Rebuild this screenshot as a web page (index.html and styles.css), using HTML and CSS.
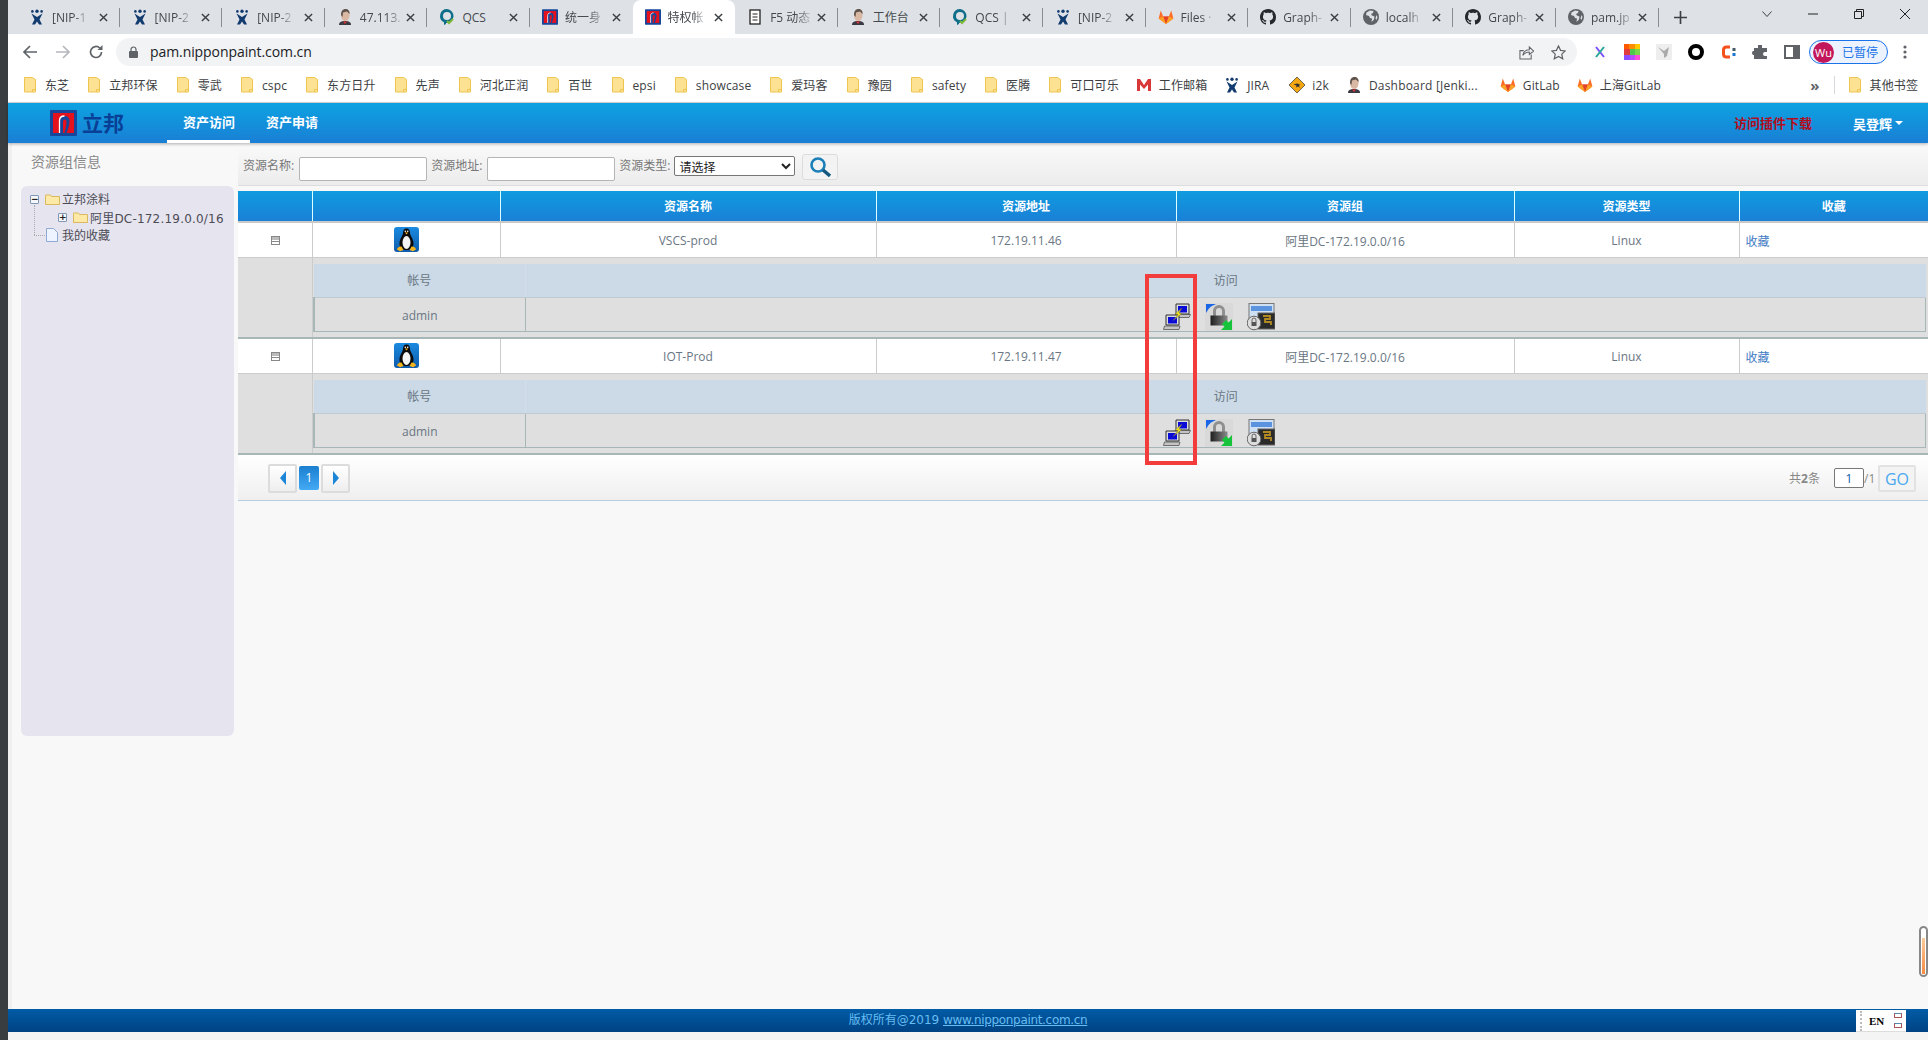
FILE: index.html
```html
<!DOCTYPE html>
<html lang="zh-CN">
<head>
<meta charset="utf-8">
<title>特权帐号</title>
<link rel="stylesheet" href="styles.css">
</head>
<body>
<svg class="defs" width="0" height="0" aria-hidden="true">
  <defs>
    <symbol id="i-jira" viewBox="0 0 16 16">
      <circle cx="8" cy="2.200" r="1.700" fill="#123b70"/><circle cx="3.400" cy="2.400" r="1.300" fill="#123b70"/><circle cx="12.600" cy="2.400" r="1.300" fill="#123b70"/>
      <path d="M2.500 4.500 8 8l5.500-3.500L10.500 10.500l2.500 5H10L8 12.500 6 15.500H3l2.500-5z" fill="#123b70"/>
    </symbol>
    <symbol id="i-jenkins" viewBox="0 0 16 16">
      <path d="M2 16c0-3 2-4 6-4s6 1 6 4z" fill="#3a3a44"/>
      <path d="M4 6c0-4 2-6 4.500-6S13 2 12.500 7c-.3 3-2 5-4.500 5S4 9 4 6z" fill="#d9b8a4"/>
      <path d="M4 6c0-4 2-6 4.500-6S13 2 12.500 5L10 2.500 6 3.500 5.500 8z" fill="#5e534c"/>
      <path d="M6 12.500h4L8 15z" fill="#d33"/>
    </symbol>
    <symbol id="i-qcs" viewBox="0 0 16 16">
      <path d="M8 0a7 7 0 0 0-3 13.300V16l2-1V14A7 7 0 0 0 8 0zm0 3a4 4 0 1 1 0 8 4 4 0 0 1 0-8z" fill="#0f6e8a"/>
      <path d="m8 12 2 2 4-4" fill="none" stroke="#7fb83a" stroke-width="2"/>
    </symbol>
    <symbol id="i-nip" viewBox="0 0 27 26">
      <rect width="27" height="26" rx="1" fill="#17479b"/>
      <rect x="3" y="3" width="21" height="20" fill="#e5121d"/>
      <path d="M9.500 23V11c0-3 2-5 5-5s5 2 5 5c0 4-1.500 8-3 12z" fill="#17479b"/>
      <path d="M9.500 23V10.500c0-3 2-4.500 5-4.500" fill="none" stroke="#fff" stroke-width="1.300"/>
      <path d="M13 23V12c0-1.500.8-2.500 1.800-2.500s1.700 1 1.700 2.500c0 3-1 7-2 11z" fill="#e5121d"/>
    </symbol>
    <symbol id="i-doc" viewBox="0 0 16 16">
      <rect x="3" y="1" width="10" height="14" fill="#fff" stroke="#222" stroke-width="1.300"/><path d="M5.500 5h5M5.500 8h5M5.500 11h5" stroke="#222"/>
    </symbol>
    <symbol id="i-gitlab" viewBox="0 0 16 16">
      <path d="M8 15 .6 9.500 2.800 1.500l2.300 6h5.800l2.300-6 2.200 8z" fill="#fc6d26"/>
      <path d="M8 15 5.100 7.500h5.800z" fill="#e24329"/><path d="M8 15 .6 9.500l4.500-2zM8 15l7.400-5.500-4.500-2z" fill="#fca326"/>
    </symbol>
    <symbol id="i-github" viewBox="0 0 16 16">
      <path fill="#24292e" d="M8 0C3.580 0 0 3.580 0 8c0 3.540 2.290 6.530 5.470 7.590.4.070.55-.17.55-.38 0-.19-.01-.82-.01-1.490-2.010.37-2.530-.49-2.690-.94-.09-.23-.48-.94-.82-1.130-.28-.15-.68-.52-.01-.53.63-.01 1.080.58 1.230.82.72 1.210 1.870.87 2.330.66.070-.52.280-.87.510-1.070-1.780-.2-3.640-.89-3.640-3.950 0-.87.310-1.590.820-2.150-.08-.2-.36-1.020.08-2.120 0 0 .67-.21 2.200.82.640-.18 1.320-.27 2-.27.680 0 1.360.090 2 .27 1.530-1.040 2.200-.82 2.200-.82.440 1.100.160 1.920.080 2.120.510.560.820 1.270.820 2.150 0 3.070-1.870 3.750-3.650 3.950.290.250.540.730.540 1.480 0 1.070-.01 1.930-.01 2.200 0 .210.150.460.550.380A8.013 8.013 0 0 0 16 8c0-4.420-3.580-8-8-8z"/>
    </symbol>
    <symbol id="i-globe" viewBox="0 0 16 16">
      <circle cx="8" cy="8" r="8" fill="#5f6368"/>
      <path d="M7 1.500 3.500 3.500 3 6l3 1 1 2 2 .5L8.500 13l2.500-2.500.5-3L9 6.500 8 5l2-1 .5-2zM13.500 6l1 2-1 3-1-1.500z" fill="#dee1e6"/>
    </symbol>
    <symbol id="i-close" viewBox="0 0 10 10"><path d="m1 1 8 8M9 1 1 9" stroke="#3c4043" stroke-width="1.600" fill="none"/></symbol>
    <symbol id="i-folder" viewBox="0 0 12 16">
      <path d="M.5.500h8l3 2v12.500H.500z" fill="#fde293" stroke="#eec550"/><path d="M8.500 15v-2.500h3" fill="none" stroke="#eec550"/>
    </symbol>
    <symbol id="i-i2k" viewBox="0 0 16 16">
      <path d="M8 0 16 8 8 16 0 8z" fill="#f3a712" stroke="#333" stroke-width=".7"/><path d="M4.500 7.500 8 6.500l3 1-1 1.500 1 2-2-1.500-2 1 .5-2z" fill="#333"/>
    </symbol>
    <symbol id="i-gmail" viewBox="0 0 16 16"><path d="M1 14V2h3l4 6 4-6h3v12h-3V7.500L8 12 4 7.500V14z" fill="#d93838"/></symbol>
    <symbol id="i-penguin" viewBox="0 0 25 25">
      <defs><linearGradient id="g-pb" x1="0" y1="0" x2="0" y2="1"><stop offset="0" stop-color="#1a8ae0"/><stop offset="1" stop-color="#0f5cab"/></linearGradient></defs>
      <rect width="25" height="25" rx="3" fill="url(#g-pb)"/>
      <path d="M12.500 1.500c-2.500 0-3.500 2-3.500 4.500 0 2.500-3.500 6-3.500 10.500S8 23 12.500 23s7-2 7-6.500S16 8.500 16 6c0-2.500-1-4.500-3.500-4.500z" fill="#0a0a0a"/>
      <ellipse cx="12.500" cy="15.500" rx="4" ry="6.500" fill="#f4f4f4"/>
      <path d="M10.800 5.500h3.400l-1.700 2z" fill="#f2b01c"/>
      <circle cx="11.300" cy="4.200" r=".8" fill="#fff"/><circle cx="13.700" cy="4.200" r=".8" fill="#fff"/>
      <path d="M3 22.500c0-2 2.500-3.500 4.500-3L9.500 23l-3.500 1.200zM22 22.500c0-2-2.500-3.500-4.500-3L15.500 23l3.500 1.200z" fill="#f5b31c"/>
    </symbol>
    <symbol id="i-conn" viewBox="0 0 28 28">
      <path d="M13 1h13v10H13z" fill="#ddd" stroke="#333"/><rect x="15" y="3" width="9" height="6.500" fill="#0a0ad8"/>
      <path d="M12 11.500h15.500L26 14.500H11z" fill="#c4c4c4" stroke="#444" stroke-width=".7"/>
      <path d="M3 12h13v10H3z" fill="#ddd" stroke="#333"/><rect x="5" y="14" width="9" height="6.500" fill="#0a0ad8"/>
      <path d="M1.500 23h15.500l-1 3.500H.5z" fill="#c4c4c4" stroke="#444" stroke-width=".7"/>
      <path d="m19 5-7 6 3 .5-5 6 9-7-3-.5z" fill="#f6e614" stroke="#665" stroke-width=".5"/>
    </symbol>
    <symbol id="i-lock" viewBox="0 0 28 28">
      <rect x="0" y="0" width="28" height="28" fill="#d9d9d9"/>
      <path d="M1 1h10L6 3.500 3.500 6 1 10z" fill="#1a66e6"/>
      <path d="M8 13V8a6 6 0 0 1 12 0v5h-3V8a3 3 0 0 0-6 0v5z" fill="#8f8f8f"/>
      <defs><linearGradient id="g-lk" x1="0" y1="0" x2="1" y2="0"><stop offset="0" stop-color="#1e1e1e"/><stop offset="1" stop-color="#8a8a8a"/></linearGradient></defs>
      <rect x="5.500" y="12.500" width="17" height="10" fill="url(#g-lk)"/>
      <path d="M27 27H16l3.500-3.500-2.500-2.500 4-4 2.500 2.500L27 16z" fill="#16c43c"/>
    </symbol>
    <symbol id="i-term" viewBox="0 0 28 28">
      <rect x="2" y="0.500" width="25" height="22" fill="#cfe0f2" stroke="#777"/>
      <rect x="4" y="3" width="21" height="5" fill="#5b93de"/>
      <rect x="11" y="10" width="17" height="16" fill="#2b2b2b" stroke="#666"/>
      <path d="M16 13h7v3h-5v3h6v3" stroke="#b38a22" stroke-width="1.800" fill="none"/>
      <circle cx="7" cy="20" r="6.800" fill="#ddd" stroke="#666"/>
      <path d="M5 19v-2a2 2 0 0 1 4 0v2" fill="none" stroke="#666"/><rect x="4.500" y="19" width="5" height="4" fill="#555"/>
    </symbol>
  </defs>
</svg>

<div class="edge"></div>
<div class="window">
  <div class="tabstrip">
    <div class="tab"><svg class="fav"><use href="#i-jira"/></svg><span class="tab-title">[NIP-1</span><svg class="tab-x"><use href="#i-close"/></svg></div>
    <div class="tab"><svg class="fav"><use href="#i-jira"/></svg><span class="tab-title">[NIP-2</span><svg class="tab-x"><use href="#i-close"/></svg></div>
    <div class="tab"><svg class="fav"><use href="#i-jira"/></svg><span class="tab-title">[NIP-2</span><svg class="tab-x"><use href="#i-close"/></svg></div>
    <div class="tab"><svg class="fav"><use href="#i-jenkins"/></svg><span class="tab-title">47.113.</span><svg class="tab-x"><use href="#i-close"/></svg></div>
    <div class="tab"><svg class="fav"><use href="#i-qcs"/></svg><span class="tab-title plain">QCS</span><svg class="tab-x"><use href="#i-close"/></svg></div>
    <div class="tab no-sep"><svg class="fav"><use href="#i-nip"/></svg><span class="tab-title">统一身</span><svg class="tab-x"><use href="#i-close"/></svg></div>
    <div class="tab active"><svg class="fav"><use href="#i-nip"/></svg><span class="tab-title">特权帐</span><svg class="tab-x"><use href="#i-close"/></svg></div>
    <div class="tab"><svg class="fav"><use href="#i-doc"/></svg><span class="tab-title">F5 动态</span><svg class="tab-x"><use href="#i-close"/></svg></div>
    <div class="tab"><svg class="fav"><use href="#i-jenkins"/></svg><span class="tab-title plain">工作台</span><svg class="tab-x"><use href="#i-close"/></svg></div>
    <div class="tab"><svg class="fav"><use href="#i-qcs"/></svg><span class="tab-title">QCS |</span><svg class="tab-x"><use href="#i-close"/></svg></div>
    <div class="tab"><svg class="fav"><use href="#i-jira"/></svg><span class="tab-title">[NIP-2</span><svg class="tab-x"><use href="#i-close"/></svg></div>
    <div class="tab"><svg class="fav"><use href="#i-gitlab"/></svg><span class="tab-title">Files ·</span><svg class="tab-x"><use href="#i-close"/></svg></div>
    <div class="tab"><svg class="fav"><use href="#i-github"/></svg><span class="tab-title">Graph-</span><svg class="tab-x"><use href="#i-close"/></svg></div>
    <div class="tab"><svg class="fav"><use href="#i-globe"/></svg><span class="tab-title">localh</span><svg class="tab-x"><use href="#i-close"/></svg></div>
    <div class="tab"><svg class="fav"><use href="#i-github"/></svg><span class="tab-title">Graph-</span><svg class="tab-x"><use href="#i-close"/></svg></div>
    <div class="tab"><svg class="fav"><use href="#i-globe"/></svg><span class="tab-title">pam.jp</span><svg class="tab-x"><use href="#i-close"/></svg></div>
    <svg class="newtab" viewBox="0 0 12 12"><path d="M6 0v12M0 6h12" stroke="#3c4043" stroke-width="1.500"/></svg>
    <div class="winctl">
      <span class="wc"><svg viewBox="0 0 10 6" class="wc-i"><path d="m.5.500 4.500 5 4.500-5" fill="none" stroke="#3c4043"/></svg></span>
      <span class="wc"><svg viewBox="0 0 10 10" class="wc-i"><path d="M0 5h10" stroke="#222"/></svg></span>
      <span class="wc"><svg viewBox="0 0 10 10" class="wc-i"><path d="M.5 2.500h7v7h-7zM2.500 2.500v-2h7v7h-2" fill="none" stroke="#222"/></svg></span>
      <span class="wc"><svg viewBox="0 0 10 10" class="wc-i"><path d="m0 0 10 10M10 0 0 10" stroke="#222"/></svg></span>
    </div>
  </div>

  <div class="toolbar">
    <svg class="navi" viewBox="0 0 16 16"><path d="M15 8H2M8 2 2 8l6 6" fill="none" stroke="#5f6368" stroke-width="1.700"/></svg>
    <svg class="navi" viewBox="0 0 16 16"><path d="M1 8h13M8 2l6 6-6 6" fill="none" stroke="#b5b8bc" stroke-width="1.700"/></svg>
    <svg class="navi" viewBox="0 0 16 16"><path d="M13.500 8A5.500 5.500 0 1 1 11.800 4" fill="none" stroke="#5f6368" stroke-width="1.700"/><path d="M14.500 1v5h-5z" fill="#5f6368"/></svg>
    <div class="addr">
      <svg class="lock" viewBox="0 0 9 12"><path d="M2 5V3.500a2.500 2.500 0 0 1 5 0V5" fill="none" stroke="#5f6368" stroke-width="1.200"/><rect y="5" width="9" height="7" rx="1" fill="#5f6368"/></svg>
      <span class="url">pam.nipponpaint.com.cn</span>
      <svg class="addr-i first" viewBox="0 0 16 16"><path d="M13 10v5H1V6h4" fill="none" stroke="#5f6368" stroke-width="1.100"/><path d="M4 11c1-4 4-6 7-6V2l4.500 4.500L11 10V7.500c-3 0-5 1-7 3.500z" fill="none" stroke="#5f6368" stroke-width="1.100"/></svg>
      <svg class="addr-i" viewBox="0 0 16 16"><path d="m8 1 2.200 4.700 5 .6-3.700 3.400 1 5L8 12.200l-4.500 2.500 1-5L.8 6.300l5-.6z" fill="none" stroke="#5f6368" stroke-width="1.300"/></svg>
    </div>
    <svg class="ext first" viewBox="0 0 16 16"><rect width="16" height="16" fill="#fafafa"/><path d="m4 3 8 10" stroke="#7c4dff" stroke-width="2"/><path d="M12 3 4 13" stroke="#26a69a" stroke-width="2"/></svg>
    <svg class="ext" viewBox="0 0 16 16"><path d="M0 0h6v5H0z" fill="#ff5a00"/><path d="M5 0h6v5H5z" fill="#ff8c00"/><path d="M11 0h5v5h-5z" fill="#ffc800"/><path d="M0 5h6v6H0z" fill="#e23b3b"/><path d="M6 5h5v6H6z" fill="#4dc94d"/><path d="M11 5h5v6h-5z" fill="#7ad94a"/><path d="M0 11h6v5H0z" fill="#8a4dff"/><path d="M6 11h5v5H6z" fill="#b84dff"/><path d="M11 11h5v5h-5z" fill="#ff4dd8"/></svg>
    <svg class="ext" viewBox="0 0 16 16"><rect width="16" height="16" fill="#eee"/><path d="M2 3 8 7l5-4-2 9-3 2 0-4z" fill="#aaa"/></svg>
    <svg class="ext" viewBox="0 0 16 16"><circle cx="8" cy="8" r="6" fill="none" stroke="#000" stroke-width="4"/></svg>
    <svg class="ext" viewBox="0 0 16 16"><path d="M10 3H6.500Q3.500 3 3.500 6v4q0 3 3 3H10" fill="none" stroke="#f4511e" stroke-width="3"/><rect x="12.500" y="4" width="3" height="3" fill="#455a64"/><rect x="12.500" y="9" width="3" height="3" fill="#1976d2"/></svg>
    <svg class="ext" viewBox="0 0 16 16"><path d="M6 1h4v3h5v4h-2a2 2 0 0 0 0 4h2v3H2v-4H1a2.500 2.500 0 0 1 0-4h1V4h4z" fill="#5f6368"/></svg>
    <svg class="ext" viewBox="0 0 16 16"><path d="M1 2h14v12H1z" fill="none" stroke="#5f6368" stroke-width="2"/><path d="M9 2h6v12H9z" fill="#5f6368"/></svg>
    <div class="profile"><span class="avatar">Wu</span><span class="paused">已暂停</span></div>
    <svg class="kebab" viewBox="0 0 4 14"><circle cx="2" cy="2" r="1.600" fill="#5f6368"/><circle cx="2" cy="7" r="1.600" fill="#5f6368"/><circle cx="2" cy="12" r="1.600" fill="#5f6368"/></svg>
  </div>

  <div class="bookmarks">
    <span class="bm"><svg class="bm-f"><use href="#i-folder"/></svg>东芝</span>
    <span class="bm"><svg class="bm-f"><use href="#i-folder"/></svg>立邦环保</span>
    <span class="bm"><svg class="bm-f"><use href="#i-folder"/></svg>零武</span>
    <span class="bm"><svg class="bm-f"><use href="#i-folder"/></svg>cspc</span>
    <span class="bm"><svg class="bm-f"><use href="#i-folder"/></svg>东方日升</span>
    <span class="bm"><svg class="bm-f"><use href="#i-folder"/></svg>先声</span>
    <span class="bm"><svg class="bm-f"><use href="#i-folder"/></svg>河北正润</span>
    <span class="bm"><svg class="bm-f"><use href="#i-folder"/></svg>百世</span>
    <span class="bm"><svg class="bm-f"><use href="#i-folder"/></svg>epsi</span>
    <span class="bm"><svg class="bm-f"><use href="#i-folder"/></svg>showcase</span>
    <span class="bm"><svg class="bm-f"><use href="#i-folder"/></svg>爱玛客</span>
    <span class="bm"><svg class="bm-f"><use href="#i-folder"/></svg>豫园</span>
    <span class="bm"><svg class="bm-f"><use href="#i-folder"/></svg>safety</span>
    <span class="bm"><svg class="bm-f"><use href="#i-folder"/></svg>医腾</span>
    <span class="bm"><svg class="bm-f"><use href="#i-folder"/></svg>可口可乐</span>
    <span class="bm tight"><svg class="bm-s"><use href="#i-gmail"/></svg>工作邮箱</span>
    <span class="bm tight jira"><svg class="bm-s"><use href="#i-jira"/></svg>JIRA</span>
    <span class="bm tight"><svg class="bm-s"><use href="#i-i2k"/></svg>i2k</span>
    <span class="bm tight dash"><svg class="bm-s"><use href="#i-jenkins"/></svg>Dashboard [Jenki...</span>
    <span class="bm tight"><svg class="bm-s"><use href="#i-gitlab"/></svg>GitLab</span>
    <span class="bm tight"><svg class="bm-s"><use href="#i-gitlab"/></svg>上海GitLab</span>
    <span class="bm-more">»</span>
    <span class="bm"><svg class="bm-f"><use href="#i-folder"/></svg>其他书签</span>
  </div>

  <header class="apphead">
    <svg class="logo-mark"><use href="#i-nip"/></svg>
    <span class="logo-text">立邦</span>
    <nav class="appnav">
      <a class="navlink on">资产访问</a>
      <a class="navlink">资产申请</a>
    </nav>
    <a class="plugin">访问插件下载</a>
    <a class="user">吴登辉<i class="caret"></i></a>
  </header>

  <div class="page">
    <aside class="side">
      <h2 class="side-title">资源组信息</h2>
      <div class="side-panel">
        <ul class="tree">
          <li class="node root"><i class="tog">−</i><svg class="t-folder" viewBox="0 0 15 12"><path d="M.5 3V1.500h5l1 1.500h8v8H.500z" fill="#ffe9a6" stroke="#d9b95f"/></svg>立邦涂料</li>
          <li class="node child"><i class="tog dark">+</i><svg class="t-folder" viewBox="0 0 15 12"><path d="M.5 3V1.500h5l1 1.500h8v8H.500z" fill="#ffe9a6" stroke="#d9b95f"/></svg>阿里DC-172.19.0.0/16</li>
          <li class="node fav-node"><svg class="t-doc" viewBox="0 0 12 14"><path d="M.5.500h7l4 4v9H.500z" fill="#eef4ff" stroke="#8ea9d6"/></svg>我的收藏</li>
        </ul>
      </div>
    </aside>

    <main class="content">
      <form class="filter">
        <label class="f-label">资源名称:</label><input class="f-input" type="text">
        <label class="f-label">资源地址:</label><input class="f-input" type="text">
        <label class="f-label">资源类型:</label>
        <select class="f-select"><option>请选择</option></select>
        <button class="f-search" type="button"><svg viewBox="0 0 22 22" class="f-glass"><circle cx="9" cy="9" r="6.500" fill="none" stroke="#1b7fb8" stroke-width="2.600"/><path d="m14 14 7 6" stroke="#14597f" stroke-width="3.400"/></svg></button>
      </form>

      <table class="grid">
        <colgroup><col class="c1"><col class="c2"><col class="c3"><col class="c4"><col class="c5"><col class="c6"><col class="c7"></colgroup>
        <thead>
          <tr><th></th><th></th><th>资源名称</th><th>资源地址</th><th>资源组</th><th>资源类型</th><th>收藏</th></tr>
        </thead>
        <tbody>
          <tr class="row">
            <td><i class="fold"></i></td><td><svg class="penguin"><use href="#i-penguin"/></svg></td>
            <td>VSCS-prod</td><td>172.19.11.46</td><td>阿里DC-172.19.0.0/16</td><td>Linux</td><td class="left"><a class="link">收藏</a></td>
          </tr>
          <tr class="subrow">
            <td class="sub-blank"></td>
            <td colspan="6" class="sub-cell">
              <table class="sub">
                <colgroup><col class="s1"><col></colgroup>
                <tr class="sub-h"><td>帐号</td><td>访问</td></tr>
                <tr class="sub-r"><td>admin</td><td><span class="acts"><svg class="act"><use href="#i-conn"/></svg><svg class="act"><use href="#i-lock"/></svg><svg class="act"><use href="#i-term"/></svg></span></td></tr>
              </table>
            </td>
          </tr>
          <tr class="row">
            <td><i class="fold"></i></td><td><svg class="penguin"><use href="#i-penguin"/></svg></td>
            <td>IOT-Prod</td><td>172.19.11.47</td><td>阿里DC-172.19.0.0/16</td><td>Linux</td><td class="left"><a class="link">收藏</a></td>
          </tr>
          <tr class="subrow">
            <td class="sub-blank"></td>
            <td colspan="6" class="sub-cell">
              <table class="sub">
                <colgroup><col class="s1"><col></colgroup>
                <tr class="sub-h"><td>帐号</td><td>访问</td></tr>
                <tr class="sub-r"><td>admin</td><td><span class="acts"><svg class="act"><use href="#i-conn"/></svg><svg class="act"><use href="#i-lock"/></svg><svg class="act"><use href="#i-term"/></svg></span></td></tr>
              </table>
            </td>
          </tr>
        </tbody>
      </table>

      <div class="pager">
        <a class="pg"><i class="arr l"></i></a>
        <a class="pg-cur">1</a>
        <a class="pg"><i class="arr r"></i></a>
        <span class="total">共<b>2</b>条</span>
        <input class="pg-input" type="text" value="1">
        <span class="pg-of">/1</span>
        <a class="go">GO</a>
      </div>

      <div class="redbox"></div>
    </main>
  </div>

  <footer class="appfoot">版权所有@2019 <a class="foot-link">www.nipponpaint.com.cn</a></footer>
  <div class="under"></div>
  <div class="ime"><i class="ime-grip"></i><span class="ime-en">EN</span><span class="ime-tog"><i></i><i></i></span></div>
  <div class="meter"><i></i></div>
</div>
</body>
</html>
```

FILE: styles.css
```css
* { box-sizing: border-box; }
html, body { margin: 0; height: 100%; }
body {
  display: flex;
  width: 1928px;
  height: 1040px;
  overflow: hidden;
  background: #f8f8f8;
  font: 12px "Open Sans", "Noto Sans CJK SC", sans-serif;
  color: #666;
}
.defs { position: absolute; }
.edge { width: 8px; flex: none; background: #3a3d3f; }
.window { flex: 1; min-width: 0; display: flex; flex-direction: column; position: relative; }

/* tabs */
.tabstrip { height: 34px; flex: none; background: #dee1e6; display: flex; padding-left: 9px; }
.tab {
  width: 102.6px; flex: none; height: 34px; display: flex; align-items: center;
  padding: 0 10px 0 12px; position: relative; color: #45494d;
}
.tab::after { content: ""; position: absolute; right: 0; top: 8px; height: 19px; width: 1px; background: #8a8d91; }
.tab.no-sep::after, .tab.active::after { display: none; }
.tab.active { background: #fff; border-radius: 8px 8px 0 0; }
.fav { width: 16px; height: 16px; flex: none; }
.tab-title {
  margin-left: 7px; flex: none; white-space: nowrap; max-width: 46px;
  -webkit-mask-image: linear-gradient(90deg, #000 65%, rgba(0,0,0,.25));
  mask-image: linear-gradient(90deg, #000 65%, rgba(0,0,0,.25));
}
.tab-title.plain { -webkit-mask-image: none; mask-image: none; }
.tab-x { width: 9px; height: 9px; margin-left: auto; flex: none; margin-right: 2px; }
.newtab { width: 13px; height: 13px; margin: 11px 0 0 15px; flex: none; }
.winctl { margin-left: auto; display: flex; height: 28px; }
.wc { width: 46px; display: flex; align-items: center; justify-content: center; }
.wc-i { width: 10px; height: 10px; }

/* toolbar */
.toolbar { height: 36px; flex: none; background: #fff; display: flex; align-items: center; padding: 0 0 0 14px; gap: 17px; }
.navi { width: 16px; height: 16px; flex: none; }
.addr {
  width: 1461px; height: 28px; margin: 0 -2px 0 -5px; flex: none; background: #f1f3f4; border-radius: 14px;
  display: flex; align-items: center; padding: 0 11px 0 13px;
}
.lock { width: 9px; height: 12px; flex: none; }
.url { margin: -2px 0 0 12px; font-size: 14px; color: #202124; letter-spacing: -.08px; }
.addr-i { width: 15px; height: 15px; flex: none; margin-left: 17px; }
.addr-i.first { margin-left: auto; }
.ext { width: 16px; height: 16px; flex: none; margin-left: -1px; }
.ext.first { margin-left: 0; }
.profile {
  width: 79px; height: 24px; flex: none; margin-left: -8px; border: 1px solid #1a73e8; border-radius: 12px;
  display: flex; align-items: center; padding-left: 3px; background: #edf3fe; color: #1a73e8;
}
.avatar { width: 21px; height: 21px; border-radius: 50%; background: #c2185b; color: #fff; text-align: center; line-height: 21px; font-size: 11px; flex: none; }
.paused { margin-left: 8px; }
.kebab { width: 4px; height: 14px; flex: none; margin-left: -2px; }

/* bookmarks */
.bookmarks {
  height: 33px; flex: none; background: #fff; border-bottom: 1px solid #d8d9de;
  display: flex; align-items: center; gap: 19px; padding: 0 0 2px 16px; color: #3c4043; white-space: nowrap; letter-spacing: .12px;
}
.bm { display: flex; align-items: center; flex: none; }
.bm-f { width: 12px; height: 16px; margin-right: 9px; flex: none; }
.bm-s { width: 16px; height: 16px; margin-right: 7px; flex: none; }
.bm.tight { margin-left: -2px; }
.bm.jira { padding-right: 3px; }
.bm.dash { padding-right: 5px; letter-spacing: .2px; }
.bm-more { margin-left: auto; padding-right: 14px; border-right: 1px solid #d8d9de; color: #5f6368; font-size: 15px; font-weight: 700; line-height: 18px; }
.bookmarks .bm:last-child { margin-right: 10px; margin-left: -5px; }

/* app header */
.apphead {
  height: 40px; flex: none; display: flex; align-items: center; padding-left: 42px; position: relative; z-index: 1;
  background: linear-gradient(#0da2e1, #1a7fd5); box-shadow: 0 1px 3px rgba(0,0,0,.3); color: #fff;
}
.logo-mark { width: 27px; height: 26px; flex: none; }
.logo-text { margin-left: 5px; font-size: 21px; font-weight: 700; color: #0a3f96; line-height: 26px; }
.appnav { display: flex; align-self: stretch; margin-left: 43px; gap: 0; }
.navlink { padding: 0 0 0 16px; width: 83px; font-size: 13px; font-weight: 700; line-height: 38px; border-bottom: 3px solid transparent; white-space: nowrap; }
.navlink.on { border-bottom-color: #fff; }
.plugin { margin-left: auto; font-size: 13px; font-weight: 700; color: #b10d1c; margin-top: -1px; }
.user { margin: 0 25px 0 41px; font-size: 13px; font-weight: 700; display: flex; align-items: center; }
.caret { width: 0; height: 0; border: 4px solid transparent; border-top-color: #fff; border-bottom: 0; margin-left: 3px; }

/* page */
.page { flex: 1; min-height: 0; display: flex; }
.side { width: 230px; flex: none; padding: 0 4px 0 9px; display: flex; flex-direction: column; border-left: 4px solid #f0f0f0; }
.side-title { margin: 0; height: 43px; padding: 10px 0 0 10px; font-size: 14px; font-weight: 400; color: #888; line-height: 18px; }
.side-panel { height: 550px; flex: none; background: #e6e4ef; border-radius: 6px; padding: 4px 0 0 9px; }
.tree { list-style: none; margin: 0; padding: 0; color: #4c4c55; }
.node { height: 18px; display: flex; align-items: center; position: relative; white-space: nowrap; }
.child { padding-left: 28px; font-family: "DejaVu Sans", "Noto Sans CJK SC", sans-serif; letter-spacing: .2px; }
.tog {
  width: 9px; height: 9px; border: 1px solid #7e97b5; background: #f4f6fa; border-radius: 1px; flex: none;
  font: 700 9px/7px "DejaVu Sans", sans-serif; color: #222; text-align: center; font-style: normal;
}
.t-folder { width: 15px; height: 13px; margin: 0 2px 0 6px; flex: none; }
.t-doc { width: 12px; height: 14px; margin: 0 4px 0 16px; flex: none; }
.child::before { content: ""; position: absolute; left: 4px; top: -3px; height: 30px; border-left: 1px dotted #aaa; }
.fav-node::before { content: ""; position: absolute; left: 4px; top: 9px; width: 11px; border-top: 1px dotted #aaa; }

.content { flex: 1; min-width: 0; position: relative; }
.filter {
  height: 43px; display: flex; align-items: center; padding: 7px 0 0 5px;
  background: linear-gradient(#fafafa, #ececec); border-bottom: 1px solid #ddd; color: #777;
}
.f-label { flex: none; margin-top: -6px; }
.f-input { width: 128px; height: 24px; margin: 2px 4px 0 5px; border: 1px solid #b5b5b5; border-radius: 2px; background: #fff; flex: none; }
.f-select { width: 121px; height: 20px; margin: -3px 0 0 4px; font: 12px "Noto Sans CJK SC", sans-serif; flex: none; background: #fff; border: 1px solid #767676; border-radius: 2px; color: #222; }
.f-search { width: 36px; height: 26px; margin: -1px 0 0 7px; padding: 0; border: 1px solid #dcdcdc; border-radius: 3px; background: #f3f3f3; display: flex; align-items: center; justify-content: center; flex: none; }
.f-glass { width: 22px; height: 22px; }

.grid { width: 1690px; margin-top: 5px; border-collapse: collapse; table-layout: fixed; }
.c1 { width: 74px; } .c2 { width: 188px; } .c3 { width: 376px; } .c4 { width: 300px; } .c5 { width: 338px; } .c6 { width: 225px; }
.grid th {
  height: 31px; padding: 0; font-weight: 700; color: #fff; text-align: center; font-size: 12px;
  background: linear-gradient(#0f9bdf, #1a80d6); border-right: 1px solid #dff;
  border-bottom: 2px solid #c9c9c9;
}
.grid th:last-child { border-right: 0; }
.row td { height: 35px; padding: 2px 0 0; background: #fff; text-align: center; border-right: 1px solid #ccc; border-bottom: 1px solid #ccc; color: #6a7683; vertical-align: middle; }
.row td:last-child { border-right: 0; }
.row td.left { text-align: left; padding-left: 6px; }
.link { color: #3f7cc4; }
.fold { display: inline-block; width: 9px; height: 9px; margin: 0 0 4px 1px; background: linear-gradient(#bbb 3px, #fff 3px, #fff 4px, #888 4px, #888 5px, #fff 5px, #fff 7px, #999 7px); border: 1px solid #888; vertical-align: middle; }
.penguin { width: 25px; height: 25px; display: inline-block; vertical-align: middle; margin-bottom: 2px; }
.subrow td.sub-blank { background: #dfdfdf; border-right: 1px solid #ccc; border-bottom: 2px solid #a7b7b7; padding: 0; }
.sub-cell { padding: 6px 2px 5px 0; background: #dfdfdf; border-bottom: 2px solid #a7b7b7; }
.sub { width: 100%; border-collapse: collapse; table-layout: fixed; }
.s1 { width: 212px; }
.sub td { text-align: center; padding: 0; color: #6a7683; }
.sub-h td { height: 34px; background: #cbdae6; border-bottom: 1px solid #bfcad0; }
.sub-h td:first-child { border-right: 1px solid #d4dee6; }
.sub-r td { height: 34px; padding-top: 1px; background: #dfdfdf; border-bottom: 1px solid #a7b7b7; }
.sub-r td:first-child { border-left: 2px solid #a7b7b7; border-right: 1px solid #a7b7b7; }
.sub-r td:last-child { border-right: 1px solid #a7b7b7; }
.acts { display: inline-flex; gap: 14px; margin-right: 14px; vertical-align: middle; margin-top: 3px; }
.act { width: 28px; height: 28px; flex: none; }

.pager {
  height: 46px; display: flex; align-items: center; padding: 1px 12px 0 30px;
  background: linear-gradient(#fff, #efefef); border-bottom: 1px solid #b9cede;
}
.pg { width: 29px; height: 29px; border: 2px solid #dcdcdc; border-radius: 2px; background: linear-gradient(#fff, #eee); display: flex; align-items: center; justify-content: center; flex: none; }
.arr { width: 0; height: 0; border-style: solid; border-width: 7px 0 7px 6px; border-color: transparent transparent transparent #1b86d8; }
.arr.l { border-width: 7px 6px 7px 0; border-color: transparent #1b86d8 transparent transparent; }
.pg-cur { width: 20px; height: 24px; margin: 0 2px; border-radius: 2px; background: linear-gradient(#1a7fcf, #44aaf5); color: #fff; text-align: center; line-height: 24px; font-size: 12px; flex: none; }
.total { margin-left: auto; color: #888; }
.total b { font-weight: 700; }
.pg-input { width: 30px; height: 20px; margin-left: 14px; border: 1px solid #777; border-radius: 2px; background: #fff; text-align: center; font: 12px "Open Sans", sans-serif; padding: 0; flex: none; color: #0b5ea8; }
.pg-of { width: 14px; color: #888; flex: none; }
.go { width: 38px; height: 27px; border: 2px solid #e2e2e2; border-radius: 2px; background: #f3f3f3; color: #4aa8f0; text-align: center; font-size: 16px; line-height: 24px; flex: none; }

.redbox { position: absolute; left: 907px; top: 131px; width: 52px; height: 191px; border: 4px solid #f33c3c; }

/* footer */
.appfoot {
  height: 23px; flex: none; background: linear-gradient(#005ca6, #004283); color: #66bdf2; text-align: center;
  font: 12px/23px "DejaVu Sans", "Noto Sans CJK SC", sans-serif;
}
.foot-link { text-decoration: underline; letter-spacing: -.32px; }
.under { height: 8px; flex: none; background: #f4f4f4; }
.ime { position: absolute; left: 1848px; top: 1010px; width: 50px; height: 22px; background: #fff; display: flex; align-items: center; border-bottom: 1px solid #ddd; }
.ime-grip { width: 2px; height: 20px; margin-left: 4px; border-left: 2px dotted #bbb; flex: none; }
.ime-en { margin-left: 7px; font: 700 11px "Liberation Serif", serif; color: #000; flex: none; }
.ime-tog { margin-left: auto; margin-right: 4px; display: flex; flex-direction: column; gap: 5px; }
.ime-tog i { width: 8px; height: 5px; border: 1px solid #a55; border-top-color: #58a; display: block; }
.meter { position: absolute; left: 1911px; top: 926px; width: 9px; height: 51px; border: 2px solid #888; border-radius: 5px; background: #fff; display: flex; align-items: flex-end; justify-content: center; }
.meter i { width: 3px; height: 36px; background: linear-gradient(#fbcb9a, #f98c42); margin-bottom: 1px; }
```
